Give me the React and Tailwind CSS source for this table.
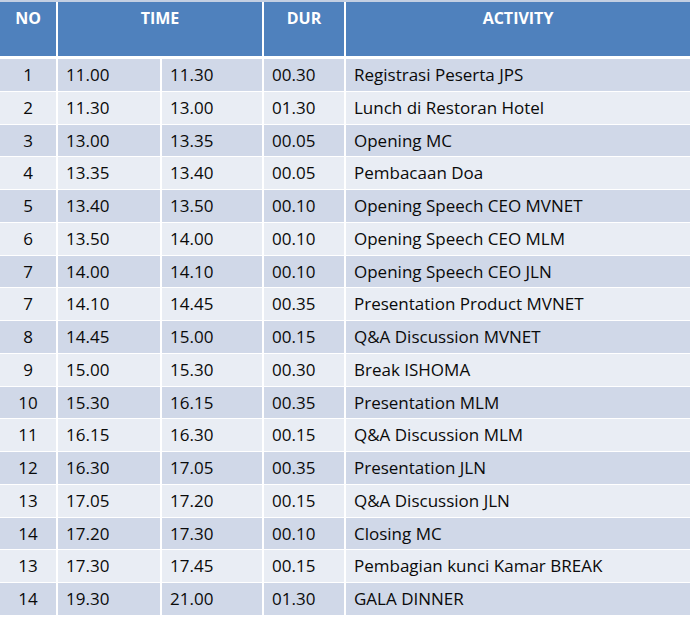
const ROWS = [
  ['1', '11.00', '11.30', '00.30', 'Registrasi Peserta JPS'],
  ['2', '11.30', '13.00', '01.30', 'Lunch di Restoran Hotel'],
  ['3', '13.00', '13.35', '00.05', 'Opening MC'],
  ['4', '13.35', '13.40', '00.05', 'Pembacaan Doa'],
  ['5', '13.40', '13.50', '00.10', 'Opening Speech CEO MVNET'],
  ['6', '13.50', '14.00', '00.10', 'Opening Speech CEO MLM'],
  ['7', '14.00', '14.10', '00.10', 'Opening Speech CEO JLN'],
  ['7', '14.10', '14.45', '00.35', 'Presentation Product MVNET'],
  ['8', '14.45', '15.00', '00.15', 'Q&A Discussion MVNET'],
  ['9', '15.00', '15.30', '00.30', 'Break ISHOMA'],
  ['10', '15.30', '16.15', '00.35', 'Presentation MLM'],
  ['11', '16.15', '16.30', '00.15', 'Q&A Discussion MLM'],
  ['12', '16.30', '17.05', '00.35', 'Presentation JLN'],
  ['13', '17.05', '17.20', '00.15', 'Q&A Discussion JLN'],
  ['14', '17.20', '17.30', '00.10', 'Closing MC'],
  ['13', '17.30', '17.45', '00.15', 'Pembagian kunci Kamar BREAK'],
  ['14', '19.30', '21.00', '01.30', 'GALA DINNER'],
];

export default function App() {
  return (
    <div className="w-[690px] h-[621px] bg-white overflow-hidden" style={{ fontFamily: '"Open Sans", Lato, sans-serif' }}>
      <div className="h-[2px] bg-[#c3cfe2]" />
      <div className="grid grid-cols-[56px_102px_100px_80px_1fr] gap-x-[2px] text-white font-bold text-[16px] text-center">
        <div className="h-[54px] bg-[#4f81bd] pt-[4px]">NO</div>
        <div className="col-span-2 h-[54px] bg-[#4f81bd] pt-[4px]">TIME</div>
        <div className="h-[54px] bg-[#4f81bd] pt-[4px]">DUR</div>
        <div className="h-[54px] bg-[#4f81bd] pt-[4px]">ACTIVITY</div>
      </div>
      <div className="mt-[3px] flex flex-col gap-y-[2px]">
        {ROWS.map((r, i) => (
          <div
            key={i}
            className="grid grid-cols-[56px_102px_100px_80px_1fr] gap-x-[2px] h-[30.75px] text-[17px] text-[#0a0a0a] leading-[30.75px]"
          >
            {r.map((c, j) => (
              <div
                key={j}
                className={`${i % 2 === 0 ? 'bg-[#d0d8e8]' : 'bg-[#e9edf4]'} ${j === 0 ? 'text-center' : 'pl-[8px]'} pt-[1px] whitespace-nowrap`}
              >
                {c}
              </div>
            ))}
          </div>
        ))}
      </div>
    </div>
  );
}
